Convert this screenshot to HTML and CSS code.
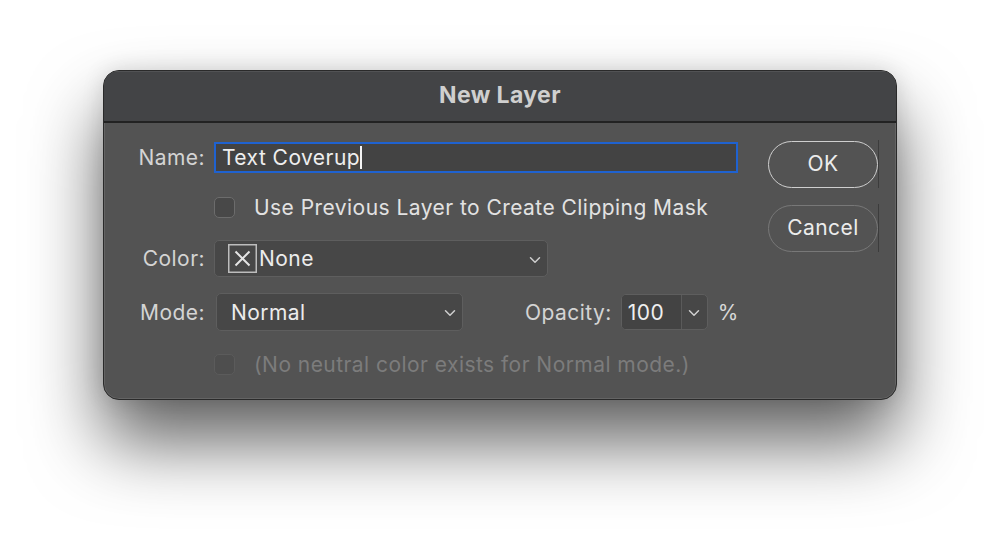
FILE: index.html
```html
<!DOCTYPE html>
<html>
<head>
<meta charset="utf-8">
<link rel="stylesheet" href="styles.css">
</head>
<body>
<div class="dialog">
  <div class="titlebar">New Layer</div>
  <div class="content">
    <div class="form">
      <div class="row row-name">
        <span class="label">Name:</span>
        <div class="text-input">Text Coverup<span class="caret"></span></div>
      </div>
      <div class="row row-check">
        <span class="label"></span>
        <span class="checkbox"></span>
        <span class="check-label">Use Previous Layer to Create Clipping Mask</span>
      </div>
      <div class="row row-color">
        <span class="label">Color:</span>
        <div class="select select-color">
          <span class="swatch">
            <svg width="29" height="29" viewBox="0 0 29 29"><rect x="0.75" y="0.75" width="27.5" height="27.5" fill="none" stroke="#bdbdbd" stroke-width="1.5"/><path d="M7.5 7.5 L21.5 21.5 M21.5 7.5 L7.5 21.5" stroke="#e4e4e4" stroke-width="2" fill="none"/></svg>
          </span>
          <span class="select-text">None</span>
          <svg class="chev" width="12" height="8" viewBox="0 0 12 8"><path d="M1.5 1.8 L6 6.2 L10.5 1.8" stroke="#cfcfcf" stroke-width="1.5" fill="none" stroke-linecap="round" stroke-linejoin="round"/></svg>
        </div>
      </div>
      <div class="row row-mode">
        <span class="label">Mode:</span>
        <div class="select select-mode">
          <span class="select-text pad">Normal</span>
          <svg class="chev" width="12" height="8" viewBox="0 0 12 8"><path d="M1.5 1.8 L6 6.2 L10.5 1.8" stroke="#cfcfcf" stroke-width="1.5" fill="none" stroke-linecap="round" stroke-linejoin="round"/></svg>
        </div>
        <span class="opacity-label">Opacity:</span>
        <div class="combo">
          <span class="combo-value">100</span>
          <span class="combo-btn">
            <svg width="12" height="8" viewBox="0 0 12 8"><path d="M1.5 1.8 L6 6.2 L10.5 1.8" stroke="#cfcfcf" stroke-width="1.5" fill="none" stroke-linecap="round" stroke-linejoin="round"/></svg>
          </span>
        </div>
        <span class="percent">%</span>
      </div>
      <div class="row row-check disabled">
        <span class="label"></span>
        <span class="checkbox"></span>
        <span class="check-label">(No neutral color exists for Normal mode.)</span>
      </div>
    </div>
    <div class="buttons">
      <button class="btn btn-default">OK</button>
      <button class="btn btn-cancel">Cancel</button>
    </div>
  </div>
</div>
</body>
</html>
```
FILE: styles.css
```css
html, body {
  margin: 0;
  padding: 0;
  background: #ffffff;
}
body {
  width: 1000px;
  height: 536px;
  overflow: hidden;
  padding: 70px 0 0 103px;
  box-sizing: border-box;
  font-family: Inter, "Liberation Sans", sans-serif;
}
.dialog {
  width: 794px;
  height: 330px;
  box-sizing: border-box;
  border: 1px solid #2a2a2a;
  border-radius: 16px;
  background: #535353;
  box-shadow: inset 0 0 0 1px rgba(255,255,255,0.10), 0 42px 72px rgba(0,0,0,0.62), 0 0 22px rgba(0,0,0,0.12);
  overflow: hidden;
  display: flex;
  flex-direction: column;
}
.titlebar {
  height: 52px;
  flex: none;
  background: #434446;
  border-bottom: 2px solid #222222;
  box-shadow: inset 0 1px 0 rgba(255,255,255,0.08);
  display: flex;
  align-items: center;
  justify-content: center;
  color: #cfcfcf;
  font-weight: 700;
  font-size: 23px;
  letter-spacing: 0.4px;
  padding-bottom: 3px;
  box-sizing: border-box;
}
.content {
  flex: 1;
  display: flex;
}
.form {
  width: 664px;
  flex: none;
  display: flex;
  flex-direction: column;
}
.row {
  display: flex;
  align-items: center;
  color: #d4d4d4;
  font-size: 21px;
  letter-spacing: 0.45px;
}
.label {
  width: 101px;
  flex: none;
  text-align: right;
  margin-right: 9px;
}
.row-name { margin-top: 19px; height: 31px; }
.row-check { height: 22px; }
.form .row-check:nth-child(2) { margin-top: 23px; }
.row-color { margin-top: 22px; height: 37px; }
.row-mode { margin-top: 16px; height: 38px; }
.row-check.disabled { margin-top: 22px; color: #7c7c7c; }

.text-input {
  width: 524px;
  height: 31px;
  box-sizing: border-box;
  border: 2px solid #1f62d0;
  background: #434343;
  color: #eeeeee;
  padding-left: 6px;
  display: flex;
  align-items: center;
}
.caret {
  display: inline-block;
  width: 2px;
  height: 23px;
  background: #f4f4f4;
  margin-left: 0;
}
.checkbox {
  width: 21px;
  height: 21px;
  box-sizing: border-box;
  border: 1.5px solid #6c6c6c;
  border-radius: 5px;
  background: #484848;
  flex: none;
  margin-right: 19px;
}
.disabled .checkbox {
  border-color: #5b5b5b;
  background: #4e4e4e;
}
.check-label {
  color: inherit;
  white-space: nowrap;
}
.row-check:not(.disabled) .check-label { color: #e2e2e2; }

.select {
  height: 37px;
  box-sizing: border-box;
  border: 1px solid #5e5e5e;
  border-radius: 5px;
  background: #474747;
  display: flex;
  align-items: center;
  color: #ececec;
}
.select-color {
  width: 334px;
  padding-left: 13px;
}
.swatch {
  display: flex;
  width: 29px;
  height: 29px;
  margin-right: 2px;
}
.select-text { flex: 1; }
.select-text.pad { padding-left: 14px; }
.chev { margin-right: 6px; margin-top: 2px; }
.select-mode {
  width: 247px;
  height: 38px;
  margin-left: 2px;
}
.opacity-label {
  margin-left: 62px;
  margin-right: 9px;
  color: #d4d4d4;
}
.combo {
  width: 87px;
  height: 36px;
  box-sizing: border-box;
  border: 1px solid #5e5e5e;
  border-radius: 5px;
  background: #474747;
  display: flex;
  overflow: hidden;
}
.combo-value {
  width: 60px;
  box-sizing: border-box;
  padding-left: 6px;
  background: #434343;
  color: #efefef;
  display: flex;
  align-items: center;
  border-right: 1px solid #5a5a5a;
}
.combo-btn {
  flex: 1;
  display: flex;
  align-items: center;
  justify-content: center;
  padding-top: 2px;
}
.percent {
  margin-left: 10px;
  color: #d8d8d8;
}

.buttons {
  width: 109px;
  flex: none;
  display: flex;
  flex-direction: column;
  padding-top: 18px;
  gap: 17px;
}
.btn {
  width: 110px;
  height: 47px;
  box-sizing: border-box;
  border-radius: 24px;
  background: #535353;
  font-family: Inter, "Liberation Sans", sans-serif;
  font-size: 21px;
  letter-spacing: 0.4px;
  color: #ececec;
  padding: 0 0 2px 0;
  position: relative;
}
.btn::after {
  content: "";
  position: absolute;
  right: -2px;
  top: -2px;
  bottom: -1px;
  width: 1px;
  background: #3c3c3c;
}
.btn-default {
  border: 1.5px solid #cfcfcf;
}
.btn-cancel {
  border: 1.5px solid #787878;
}
```
